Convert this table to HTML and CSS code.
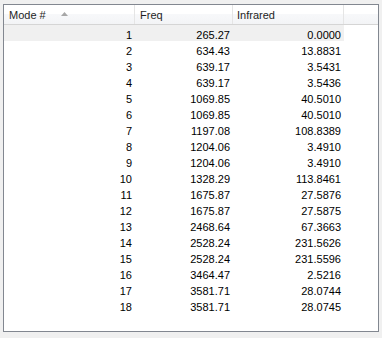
FILE: index.html
```html
<!DOCTYPE html>
<html>
<head>
<meta charset="utf-8">
<link rel="stylesheet" href="styles.css">
</head>
<body>
<div class="list">
  <div class="header">
    <div class="hcell first">Mode #<svg class="sort" width="7" height="4" viewBox="0 0 7 4"><path d="M0 4 L3.5 0 L7 4 Z" fill="#a7a7a7"/></svg></div>
    <div class="hcell second">Freq</div>
    <div class="hcell third">Infrared</div>
    <div class="hcell filler"></div>
  </div>
  <div class="rows">
    <div class="row sel"><span>1</span><span>265.27</span><span>0.0000</span></div>
    <div class="row"><span>2</span><span>634.43</span><span>13.8831</span></div>
    <div class="row"><span>3</span><span>639.17</span><span>3.5431</span></div>
    <div class="row"><span>4</span><span>639.17</span><span>3.5436</span></div>
    <div class="row"><span>5</span><span>1069.85</span><span>40.5010</span></div>
    <div class="row"><span>6</span><span>1069.85</span><span>40.5010</span></div>
    <div class="row"><span>7</span><span>1197.08</span><span>108.8389</span></div>
    <div class="row"><span>8</span><span>1204.06</span><span>3.4910</span></div>
    <div class="row"><span>9</span><span>1204.06</span><span>3.4910</span></div>
    <div class="row"><span>10</span><span>1328.29</span><span>113.8461</span></div>
    <div class="row"><span>11</span><span>1675.87</span><span>27.5876</span></div>
    <div class="row"><span>12</span><span>1675.87</span><span>27.5875</span></div>
    <div class="row"><span>13</span><span>2468.64</span><span>67.3663</span></div>
    <div class="row"><span>14</span><span>2528.24</span><span>231.5626</span></div>
    <div class="row"><span>15</span><span>2528.24</span><span>231.5596</span></div>
    <div class="row"><span>16</span><span>3464.47</span><span>2.5216</span></div>
    <div class="row"><span>17</span><span>3581.71</span><span>28.0744</span></div>
    <div class="row"><span>18</span><span>3581.71</span><span>28.0745</span></div>
  </div>
</div>
</body>
</html>
```
FILE: styles.css
```css
html, body {
  margin: 0;
  padding: 0;
  background: #f0f0f0;
}
body {
  padding: 4px 3px 0 3px;
  font-family: "Liberation Sans", Arial, sans-serif;
  font-size: 11px;
  color: #000;
}
.list {
  box-sizing: border-box;
  width: 376px;
  height: 328px;
  border: 1px solid #828790;
  background: #fff;
}
.header {
  display: grid;
  grid-template-columns: 131px 98px 111px 1fr;
  height: 19px;
  border-bottom: 1px solid #d5d5d5;
  background: linear-gradient(#ffffff, #ffffff 50%, #f7f8fa 50%, #f3f4f6);
}
.hcell {
  display: flex;
  align-items: center;
  border-right: 1px solid #e5e5e5;
  padding-left: 5px;
  padding-top: 1px;
  color: #1e1e1e;
}
.hcell.third {
  padding-left: 4px;
}
.hcell.filler {
  border-right: none;
}
.sort {
  margin-left: 15px;
  margin-top: -3px;
}
.row {
  display: grid;
  grid-template-columns: 131px 98px 111px 1fr;
  height: 16px;
}
.row span {
  height: 16px;
  line-height: 20px;
  text-align: right;
  padding-right: 3px;
  overflow: visible;
}
.row.sel span {
  background: #f0f0f0;
}
```
